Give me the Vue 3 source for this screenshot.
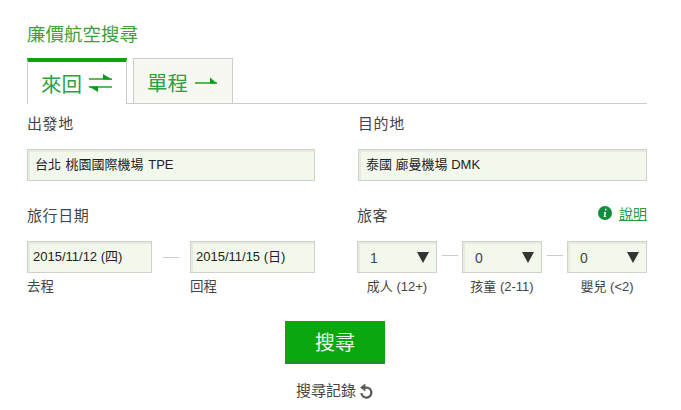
<template>
  <div class="search-box">
    <h2 class="title">廉價航空搜尋</h2>
    <div class="tabs">
      <div class="tab active">
        <span>來回</span>
        <svg width="24" height="18" viewBox="0 0 24 18">
          <path d="M0 5h23" stroke="#0ca30c" stroke-width="1.4" />
          <path d="M14 0l9 5.5h-9z" fill="#0a9a1a" />
          <path d="M0 13h23" stroke="#0ca30c" stroke-width="1.4" />
          <path d="M9 18L0 12.5h9z" fill="#0a9a1a" />
        </svg>
      </div>
      <div class="tab">
        <span>單程</span>
        <svg width="23" height="12" viewBox="0 0 23 12">
          <path d="M0 7h22" stroke="#0ca30c" stroke-width="1.4" />
          <path d="M15 1.5l7 6h-7z" fill="#0a9a1a" />
        </svg>
      </div>
    </div>

    <div class="form">
      <div class="field">
        <label>出發地</label>
        <div class="input airport">台北 桃園國際機場 TPE</div>
      </div>
      <div class="field">
        <label>目的地</label>
        <div class="input">泰國 廊曼機場 DMK</div>
      </div>

      <div class="field lower">
        <label>旅行日期</label>
        <div class="row dates">
          <div class="col" v-for="d in dates" :key="d.caption">
            <div class="input date">{{ d.value }}</div>
            <div class="caption">{{ d.caption }}</div>
          </div>
          <i class="dash date-dash"></i>
        </div>
      </div>

      <div class="field lower travellers">
        <div class="label-row">
          <label>旅客</label>
          <a class="help">
            <svg width="14" height="14" viewBox="0 0 14 14">
              <circle cx="7" cy="7" r="7" fill="#0e8f3c" />
              <path d="M6.2 5.9h2l-1 4.3h1v.8H5.6l.9-4.3h-.6zM7.1 2.8h1.5l-.3 1.7H6.8z" fill="#fff" />
            </svg>
            <span>說明</span>
          </a>
        </div>
        <div class="row pax">
          <template v-for="(p, i) in passengers" :key="p.caption">
            <i v-if="i > 0" class="dash"></i>
            <div class="col">
              <div class="input select">
                <span>{{ p.value }}</span>
                <b class="arrow"></b>
              </div>
              <div class="caption center">{{ p.caption }}</div>
            </div>
          </template>
        </div>
      </div>
    </div>

    <div class="actions">
      <button class="submit">搜尋</button>
      <div class="history">
        <span>搜尋記錄</span>
        <svg width="15" height="16" viewBox="0 0 15 16">
          <path d="M4 4.6h3.6a5 5 0 1 1-5.2 5.6" fill="none" stroke="#5a5a5a" stroke-width="2.3" />
          <path d="M6.4 0.4v8.2L1 4.6z" fill="#5a5a5a" />
        </svg>
      </div>
    </div>
  </div>
</template>

<script setup>
const dates = [
  { value: '2015/11/12 (四)', caption: '去程' },
  { value: '2015/11/15 (日)', caption: '回程' }
]

const passengers = [
  { value: '1', caption: '成人 (12+)' },
  { value: '0', caption: '孩童 (2-11)' },
  { value: '0', caption: '嬰兒 (<2)' }
]
</script>

<style>
body {
  background: #fff;
}
</style>

<style scoped>
.search-box {
  width: 620px;
  height: 410px;
  margin-left: 27px;
  overflow: hidden;
  font-family: Arial, "Liberation Sans", "Noto Sans CJK TC", sans-serif;
  color: #333;
}

.title {
  margin: 0;
  padding-top: 24px;
  height: 34px;
  line-height: 21px;
  font-size: 18.5px;
  font-weight: normal;
  color: #3f9f3f;
}

.tabs {
  display: flex;
  gap: 6px;
  height: 46px;
  border-bottom: 1px solid #ccc;
  box-sizing: border-box;
}

.tab {
  width: 100px;
  height: 45px;
  box-sizing: border-box;
  border: 1px solid #ccc;
  border-bottom: 0;
  background: #f6f8f1;
  display: flex;
  align-items: center;
  gap: 7px;
  padding: 1px 0 0 13px;
  font-size: 20.5px;
  color: #2f9f3f;
}

.tab.active {
  height: 46px;
  background: #fff;
  border-top: 4px solid #0ca30c;
  padding: 0 0 0 13px;
}

.form {
  display: grid;
  grid-template-columns: 288px 289px;
  column-gap: 43px;
}

.field label {
  display: block;
  font-size: 15px;
  line-height: 20px;
  letter-spacing: 0.6px;
  color: #444;
}

.field {
  padding-top: 10px;
}

.field.lower {
  padding-top: 25px;
}

.travellers {
  margin-left: -1px;
}

.field > label,
.label-row {
  height: 20px;
  margin-bottom: 15px;
}

.label-row {
  display: flex;
  justify-content: space-between;
}

.help {
  display: flex;
  align-items: center;
  gap: 7px;
  margin-top: -7px;
  font-size: 14px;
  color: #2a9a3a;
  text-decoration: underline;
}

.input {
  height: 32px;
  box-sizing: border-box;
  border: 1px solid #cfd3c7;
  box-shadow: inset 2px 2px 0 #e6ebdf;
  background: #f3f8ec;
  padding-left: 7px;
  line-height: 30px;
  font-size: 13px;
  color: #222;
}

.airport {
  word-spacing: 1px;
}

.row {
  position: relative;
  display: flex;
  align-items: flex-start;
}

.dates {
  justify-content: space-between;
}

.dates .col {
  width: 125px;
}

.date {
  padding-left: 5px;
}

.dash {
  flex: none;
  display: block;
  width: 16px;
  height: 1px;
  margin: 14px 4px 0 5px;
  background: #ccc;
}

.date-dash {
  position: absolute;
  left: 136px;
  top: 2px;
  margin: 14px 0 0;
}

.pax .col {
  width: 80px;
}

.select {
  display: flex;
  align-items: center;
  justify-content: space-between;
  padding: 1px 7px 0 12px;
  color: #444;
  font-size: 14px;
}

.arrow {
  width: 0;
  height: 0;
  border-left: 6.5px solid transparent;
  border-right: 6.5px solid transparent;
  border-top: 11px solid #333;
}

.caption {
  margin-top: 6px;
  font-size: 13.5px;
  line-height: 16px;
  color: #444;
}

.caption.center {
  font-size: 13px;
  text-align: center;
}

.actions {
  display: flex;
  flex-direction: column;
  align-items: center;
  padding-top: 26px;
  margin-left: -4px;
}

.submit {
  width: 100px;
  height: 43px;
  border: 0;
  border-bottom: 3px solid #1c9130;
  background: #0aa70f;
  color: #eaf7ea;
  font-family: inherit;
  font-size: 20px;
  padding: 0;
}

.history {
  display: flex;
  align-items: center;
  gap: 3px;
  margin-top: 19px;
  font-size: 15px;
  line-height: 16px;
  color: #444;
}
</style>
